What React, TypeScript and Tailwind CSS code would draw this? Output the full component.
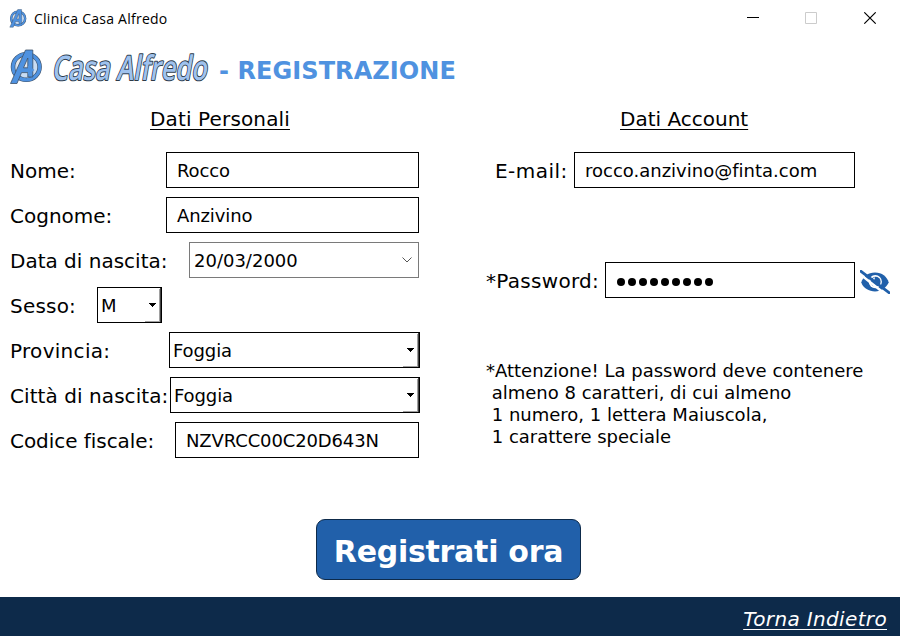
import React from "react";

const Emblem = ({ className }: { className: string }) => (
  <svg viewBox="0 0 34 36" className={className}>
    <circle cx="17.5" cy="18" r="12.500" fill="#c9dcf3" />
    <path d="M6 8a14 14 0 0 1 12-3v12L9 21z" fill="#e8e8e8" />
    <ellipse cx="17.300" cy="18" rx="13.300" ry="12.800" fill="none" stroke="#3c5068" strokeWidth="4.500" />
    <ellipse cx="17.300" cy="18" rx="13.300" ry="12.800" fill="none" stroke="#4f92e0" strokeWidth="3.300" />
    <path
      d="M1.500 34.500 16.500 1h7.300v27h-5v-4.400H12.500L8 34.500zM14.500 18.800h4.300V9z"
      fill="#4f92e0"
      stroke="#3c5068"
      strokeWidth=".8"
      fillRule="evenodd"
    />
    <path d="m19 16.500 6.500 4.500-6.500 4.500z" fill="#4f92e0" />
  </svg>
);

const HiddenEye = ({ className }: { className: string }) => (
  <svg viewBox="0 0 30 24" className={className}>
    <path d="M1.300 12.500C3 6.500 8 2.500 15 2.500s12 4 13.700 10C26 18 21 21.500 15 21.500S3 18 1.300 12.500z" fill="#2160aa" />
    <circle cx="15.300" cy="11.700" r="6.600" fill="#fff" />
    <circle cx="15.600" cy="11.700" r="5" fill="#2160aa" />
    <path d="M11.500 10a2 2 0 0 0 2.500-2.500" fill="none" stroke="#fff" strokeWidth="1.500" />
    <path d="M-.5 3.800 27 25.500" stroke="#fff" strokeWidth="2.500" />
    <path d="M1 1.300 29 22.700" stroke="#2160aa" strokeWidth="2.800" strokeLinecap="round" />
  </svg>
);

const Row = ({ label, tracking, children }: { label: string; tracking: string; children: React.ReactNode }) => (
  <div className="flex h-9 items-center justify-between">
    <span className={`pt-0.5 text-[20px] leading-9 ${tracking}`}>{label}</span>
    {children}
  </div>
);

const Field = ({ value, className }: { value: string; className: string }) => (
  <div className={`h-9 border border-black text-[18px] leading-[36px] ${className}`}>{value}</div>
);

const Combo = ({ value, className }: { value: string; className: string }) => (
  <div className={`flex h-9 justify-between border border-black ${className}`}>
    <span className="pl-[3px] text-[18px] leading-[36px] tracking-[-0.1px]">{value}</span>
    <svg viewBox="0 0 17 34" className="h-[34px] w-[17px]" shapeRendering="crispEdges">
      <path d="M1 33.500h15M15.500 1v33" stroke="#a0a0a0" />
      <path d="M16.500 0v34" stroke="#404040" />
      <path d="M5 15h7v1h-1v1h-1v1h-1v1h-1v-1h-1v-1h-1v-1h-1z" fill="#000" />
    </svg>
  </div>
);

export default function App() {
  return (
    <div className="flex h-[636px] w-[900px] flex-col overflow-hidden bg-white font-['DejaVu_Sans',sans-serif] whitespace-nowrap text-black [font-variant-ligatures:none]">
      <header className="flex h-[37px] items-center justify-between pl-2">
        <div className="flex items-center gap-[6px]">
          <Emblem className="h-[19px] w-5" />
          <span className="pb-px font-['Open_Sans',sans-serif] text-[14px] tracking-[0.250px]">Clinica Casa Alfredo</span>
        </div>
        <svg viewBox="0 0 130 12" className="mr-[23px] mb-px h-3 w-[130px]">
          <path d="M0 5.500h12" stroke="#000" />
          <path d="M58.500 .5h11v11h-11z" fill="none" stroke="#ccc" />
          <path d="m117.300.3 11.400 11.400m0-11.400-11.400 11.400" stroke="#000" strokeWidth="1.100" />
        </svg>
      </header>

      <div className="flex h-[62px] items-start pt-3 pl-[9px]">
        <Emblem className="h-9 w-[34px]" />
        <svg viewBox="0 0 162 44" className="ml-[6px] h-[44px] w-[162px]">
          <text
            x="0"
            y="0"
            transform="translate(2.500 31) skewX(-10)"
            textLength="155"
            lengthAdjust="spacingAndGlyphs"
            strokeWidth="2"
            strokeLinejoin="round"
            className="fill-[#9fc2ee] stroke-[#2c3a48] font-['Open_Sans',sans-serif] text-[34px] font-semibold [paint-order:stroke]"
          >
            Casa Alfredo
          </text>
        </svg>
        <h1 className="ml-2 pt-[8px] text-[24px] leading-[28px] font-bold tracking-[0.080px] text-[#4f92e0]">- REGISTRAZIONE</h1>
      </div>

      <main className="flex h-[420px]">
        <section className="w-[419px] pl-[10px]">
          <h2 className="mb-[15px] pt-0.5 pl-[140px] text-[20px] leading-9 tracking-[0.140px] underline decoration-1 underline-offset-[3px]">Dati Personali</h2>
          <div className="flex flex-col gap-[9px]">
            <Row label="Nome:" tracking=""><Field value="Rocco" className="w-[253px] pl-[10px] tracking-[-0.150px]" /></Row>
            <Row label="Cognome:" tracking=""><Field value="Anzivino" className="w-[253px] pl-[10px] tracking-[-0.100px]" /></Row>
            <Row label="Data di nascita:" tracking="">
              <div className="flex h-9 w-[230px] items-center justify-between border border-[#7a7a7a] pr-[6px] pl-1 text-[18px] leading-[36px]">
                <span className="pt-0.5">20/03/2000</span>
                <svg viewBox="0 0 10 6" className="h-[6px] w-[10px]"><path d="m.5.5 4.500 4.500L9.500.5" fill="none" stroke="#555" /></svg>
              </div>
            </Row>
            <div className="flex h-9">
              <span className="w-[87px] pt-px text-[20px] leading-9 tracking-[0.200px]">Sesso:</span>
              <Combo value="M" className="w-[65px]" />
            </div>
            <div className="-mr-px flex flex-col gap-[9px]">
              <Row label="Provincia:" tracking="tracking-[0.300px]"><Combo value="Foggia" className="w-[251px]" /></Row>
              <Row label="Città di nascita:" tracking="tracking-[0.070px]"><Combo value="Foggia" className="w-[250px]" /></Row>
            </div>
            <Row label="Codice fiscale:" tracking="tracking-[-0.050px]"><Field value="NZVRCC00C20D643N" className="w-[244px] pl-[10px] tracking-[-0.130px]" /></Row>
          </div>
        </section>

        <section className="w-[481px] pl-[67px]">
          <h2 className="mb-[15px] pt-0.5 pl-[134px] text-[20px] leading-9 underline decoration-1 underline-offset-[3px]">Dati Account</h2>
          <div className="flex h-9">
            <span className="w-[88px] pt-px pl-[9px] text-[20px] leading-9 tracking-[0.450px]">E-mail:</span>
            <Field value="rocco.anzivino@finta.com" className="w-[281px] pl-[10px]" />
          </div>
          <div className="mt-[74px] flex h-9 items-center">
            <span className="w-[119px] pt-0.5 text-[20px] leading-9 tracking-[0.300px]">*Password:</span>
            <div className="flex h-9 w-[250px] items-center gap-[3px] border border-black pt-[3px] pl-[11px]">
              {Array.from({ length: 9 }, (_, i) => <i key={i} className="size-2 rounded-full bg-black" />)}
            </div>
            <HiddenEye className="mt-1 ml-[5px] h-6 w-[30px]" />
          </div>
          <p className="mt-[62px] text-[18px] leading-[22px] whitespace-pre">{"*Attenzione! La password deve contenere\n almeno 8 caratteri, di cui almeno\n 1 numero, 1 lettera Maiuscola,\n 1 carattere speciale"}</p>
        </section>
      </main>

      <div className="flex h-[78px] justify-center pr-[3px]">
        <button className="h-[61px] w-[265px] rounded-[9px] border border-[#0d2a4a] bg-[#2160aa] pt-1 text-[30px] leading-none font-bold tracking-[-0.270px] text-white">Registrati ora</button>
      </div>
      <footer className="flex h-[39px] items-center justify-end bg-[#0d2a4a] pt-1 pr-[13px]">
        <a className="text-[20px] tracking-[0.350px] text-white italic underline decoration-1 underline-offset-[3px]">Torna Indietro</a>
      </footer>
    </div>
  );
}
